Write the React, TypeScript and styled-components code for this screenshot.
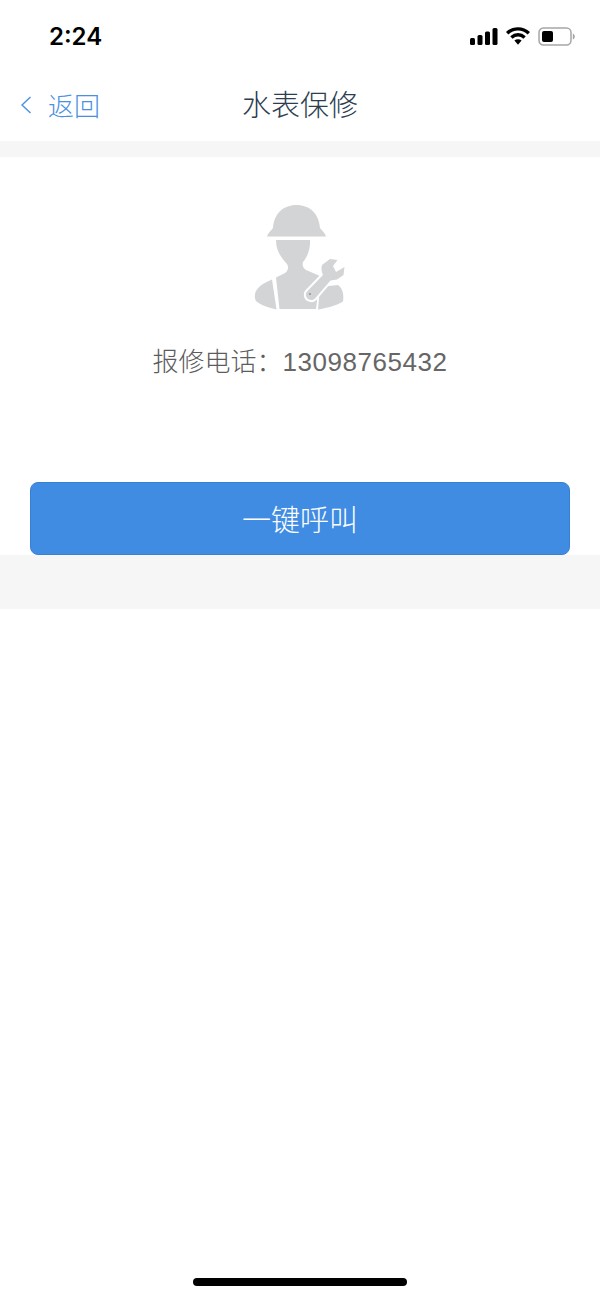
import styled, { createGlobalStyle } from "styled-components";

const GlobalStyle = createGlobalStyle`
  html, body {
    margin: 0;
    padding: 0;
    background: #ffffff;
  }
  * {
    box-sizing: border-box;
  }
`;

const SignalIcon = () => (
  <svg width="28" height="17" viewBox="0 0 28 17">
    <rect x="0" y="10" width="5" height="7" rx="1.5" fill="#000" />
    <rect x="7.5" y="7" width="5" height="10" rx="1.5" fill="#000" />
    <rect x="15" y="3.5" width="5" height="13.5" rx="1.5" fill="#000" />
    <rect x="22.5" y="0" width="5" height="17" rx="1.5" fill="#000" />
  </svg>
);

const WifiIcon = () => (
  <svg width="24" height="18" viewBox="0 0 24 18">
    <path d="M1.2 6.2C7.2 0.4 16.800 0.4 22.800 6.200" fill="none" stroke="#000" strokeWidth="3.4" />
    <path d="M5.400 10.400C9.300 6.800 14.700 6.800 18.600 10.400" fill="none" stroke="#000" strokeWidth="3.4" />
    <path d="M8.400 13.600L12 17.800L15.600 13.600C13.400 11.700 10.600 11.700 8.400 13.600Z" fill="#000" />
  </svg>
);

const BatteryIcon = () => (
  <svg width="37" height="19" viewBox="0 0 37 19">
    <rect x="1" y="1" width="32" height="17" rx="4.5" fill="none" stroke="#a6a6a6" strokeWidth="1.5" />
    <rect x="4" y="4" width="11" height="11" rx="2" fill="#000" />
    <path d="M34.800 6.500C36 7 36.800 8 36.800 9.500C36.800 11 36 12 34.800 12.500Z" fill="#a6a6a6" />
  </svg>
);

const BackArrow = () => (
  <svg width="12" height="18" viewBox="0 0 12 18">
    <path d="M9.500 1L1 9L9.500 17" fill="none" stroke="#4a90e2" strokeWidth="1.4" />
  </svg>
);

const WorkerIcon = () => (
  <svg width="140" height="130" viewBox="0 0 140 130">
    <path
      d="M37 46.500C38 43 41 41 43 38C44 24 53 15 66.500 15C80 15 89 24 90 38C92 41 95 43 96 46.500Z"
      fill="#d3d4d6"
    />
    <path
      d="M46 50H80C80.500 58 78 66 73 72C72 75 73 78 76 80L90 86L86 119H49.500L46 87.500L55 83C58 81 59 77 57 74C50 66 46 60 46 50Z"
      fill="#d3d4d6"
    />
    <path d="M42 89.500C33 93 26 98 25 104C24.500 108 25 110 27 112C33 116 40 118 46.500 119.500L42 89.500Z" fill="#d3d4d6" />
    <path d="M88 119.500C96 118 106 116 113 111.500C114 105 113 99 108 95L90 97L88 119.500Z" fill="#d3d4d6" />
    <path
      d="M92 75L100 69L107.500 70L103 76L106 82L114.500 77L113.500 85L107 89.500L100.500 90.500L85 108.500C82 111.500 77 110 76 106C75.500 104 76 102.500 77.500 101L93 85C91.500 82 91 78 92 75Z"
      fill="#d3d4d6"
      stroke="#ffffff"
      strokeWidth="4"
      strokeLinejoin="round"
      paintOrder="stroke"
    />
    <circle cx="80" cy="104" r="1" fill="#8f9092" />
  </svg>
);

const App = () => {
  return (
    <>
      <GlobalStyle />
      <Page>
        <StatusBar>
          <Time>2:24</Time>
          <StatusIcons>
            <SignalIcon />
            <WifiIcon />
            <BatteryIcon />
          </StatusIcons>
        </StatusBar>
        <NavBar>
          <BackLink>
            <BackArrow />
            <BackText>返回</BackText>
          </BackLink>
          <Title>水表保修</Title>
        </NavBar>
        <Divider />
        <RepairCard>
          <IconWrap>
            <WorkerIcon />
          </IconWrap>
          <PhoneText>
            报修电话：<PhoneNumber>13098765432</PhoneNumber>
          </PhoneText>
          <CallButton>一键呼叫</CallButton>
        </RepairCard>
        <FooterBand />
        <HomeArea>
          <HomeIndicator />
        </HomeArea>
      </Page>
    </>
  );
};

const Page = styled.div`
  width: 600px;
  height: 1299px;
  background: #ffffff;
  display: flex;
  flex-direction: column;
  overflow: hidden;
  font-family: "Noto Sans CJK SC", "Noto Sans", sans-serif;
`;

const StatusBar = styled.div`
  height: 72px;
  padding: 0 25px 0 49px;
  display: flex;
  align-items: center;
  justify-content: space-between;
`;

const Time = styled.div`
  font-family: "Inter", "Liberation Sans", sans-serif;
  font-size: 24px;
  font-weight: 600;
  color: #000000;
`;

const StatusIcons = styled.div`
  display: flex;
  align-items: center;
  gap: 8px;
`;

const NavBar = styled.div`
  height: 69px;
  padding-bottom: 7px;
  position: relative;
  display: flex;
  align-items: center;
  justify-content: center;
`;

const BackLink = styled.div`
  position: absolute;
  left: 21px;
  top: 0;
  height: 100%;
  padding-bottom: 4px;
  display: flex;
  align-items: center;
  gap: 15px;
`;

const BackText = styled.span`
  font-size: 26px;
  font-weight: 300;
  color: #4a90e2;
`;

const Title = styled.div`
  font-size: 29px;
  font-weight: 300;
  color: #2c3e50;
`;

const Divider = styled.div`
  height: 16px;
  background: #f6f6f6;
`;

const RepairCard = styled.div`
  height: 398px;
  padding: 33px 30px 0;
  display: flex;
  flex-direction: column;
  align-items: center;
`;

const IconWrap = styled.div`
  height: 130px;
  display: flex;
`;

const PhoneText = styled.div`
  margin-top: 21px;
  font-size: 26px;
  font-weight: 300;
  line-height: 38px;
  color: #5c5c5c;
`;

const PhoneNumber = styled.span`
  font-family: "Liberation Sans", sans-serif;
  font-weight: 400;
  color: #666666;
  letter-spacing: 0.55px;
`;

const CallButton = styled.button`
  margin-top: 101px;
  width: 540px;
  height: 73px;
  padding-bottom: 3px;
  border: 1px solid #3a80d2;
  border-radius: 8px;
  background: #408ce3;
  color: #ffffff;
  font-family: inherit;
  font-size: 29px;
  font-weight: 300;
`;

const FooterBand = styled.div`
  height: 54px;
  background: #f6f6f6;
`;

const HomeArea = styled.div`
  flex: 1;
  display: flex;
  align-items: flex-end;
  justify-content: center;
  padding-bottom: 13px;
`;

const HomeIndicator = styled.div`
  width: 214px;
  height: 8px;
  border-radius: 4px;
  background: #000000;
`;

export default App;
